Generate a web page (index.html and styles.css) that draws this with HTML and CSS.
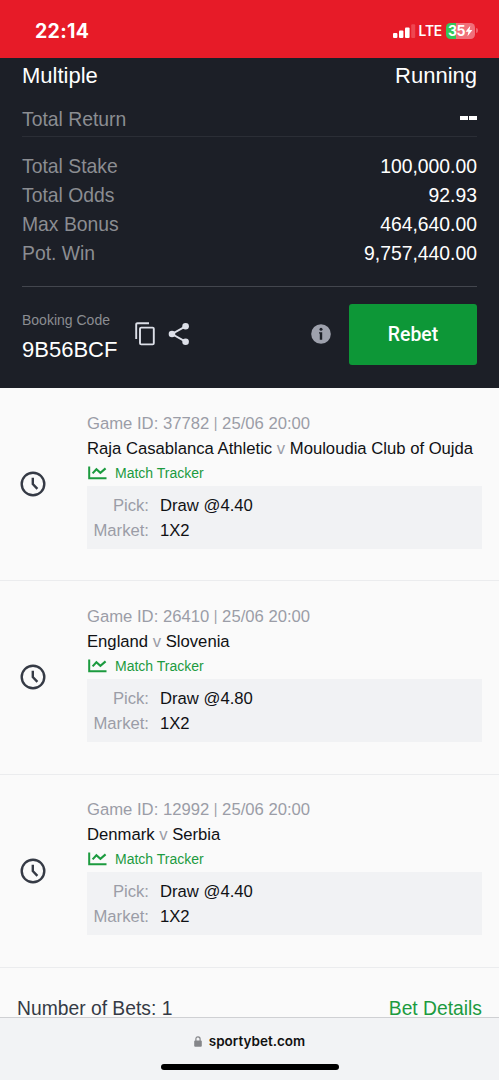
FILE: index.html
```html
<!DOCTYPE html>
<html lang="en">
<head>
<meta charset="utf-8">
<meta name="viewport" content="width=device-width, initial-scale=1">
<title>SportyBet</title>
<link rel="stylesheet" href="styles.css">
</head>
<body>
<svg class="sprite" width="0" height="0">
  <symbol id="clock" viewBox="0 0 26 26">
    <circle cx="13" cy="13" r="11.3" fill="none" stroke="#353a45" stroke-width="2.4"/>
    <path d="M12.8 6.8V13L17.4 17.8" fill="none" stroke="#353a45" stroke-width="2.4"/>
  </symbol>
  <symbol id="chart" viewBox="0 0 19 14">
    <path d="M1.2 0.5V12.3H18.5" fill="none" stroke="#1c9b3f" stroke-width="2"/>
    <path d="M4.6 7.4L8.4 3.2L12.4 6.8L17.6 2.4" fill="none" stroke="#1c9b3f" stroke-width="2.1"/>
  </symbol>
</svg>
<div class="screen">
  <header class="status">
    <span class="time">22:14</span>
    <div class="indicators">
      <svg class="signal" width="23" height="14" viewBox="0 0 23 14">
        <rect x="0" y="9" width="4.4" height="5" rx="1" fill="#fff"/>
        <rect x="6" y="6.5" width="4.4" height="7.5" rx="1" fill="#fff"/>
        <rect x="12" y="3.5" width="4.6" height="10.5" rx="1" fill="#fff"/>
        <rect x="18.2" y="0.3" width="4" height="13.7" rx="1" fill="#ee4651"/>
      </svg>
      <span class="network">LTE</span>
      <div class="battery">
        <span>35</span>
        <svg width="8" height="12" viewBox="0 0 8 12"><path d="M5.3 0.8L0.6 6.7H3.4L2.5 11.2L7.4 5.1H4.5Z" fill="#fff"/></svg>
      </div>
      <i class="battery-tip"></i>
    </div>
  </header>

  <section class="summary">
    <div class="heading"><span>Multiple</span><span>Running</span></div>
    <div class="row return"><span>Total Return</span><b class="dashes"><i></i><i></i></b></div>
    <div class="totals">
      <div class="row"><span>Total Stake</span><b>100,000.00</b></div>
      <div class="row"><span>Total Odds</span><b>92.93</b></div>
      <div class="row"><span>Max Bonus</span><b>464,640.00</b></div>
      <div class="row"><span>Pot. Win</span><b>9,757,440.00</b></div>
    </div>
    <div class="booking">
      <div class="code"><small>Booking Code</small><span>9B56BCF</span></div>
      <svg class="copy" width="20" height="24" viewBox="0 0 20 24" fill="none" stroke="#dcdfe8" stroke-width="1.9">
        <path d="M1.2 17V2.5Q1.2 1.2 2.5 1.2H14"/>
        <rect x="5" y="5.6" width="13.8" height="16.8" rx="1.2"/>
      </svg>
      <svg class="share" width="22" height="24" viewBox="0 0 22 24">
        <path d="M17.5 4.3L4 12L17.5 19.7" fill="none" stroke="#dcdfe8" stroke-width="1.9"/>
        <circle cx="17.6" cy="4.2" r="3.3" fill="#dcdfe8"/><circle cx="4" cy="12" r="3.3" fill="#dcdfe8"/><circle cx="17.6" cy="19.8" r="3.3" fill="#dcdfe8"/>
      </svg>
      <svg class="info" width="20" height="20" viewBox="0 0 20 20">
        <circle cx="10" cy="10" r="9.8" fill="#9ea1ad"/>
        <circle cx="10" cy="5.3" r="1.5" fill="#1c1f27"/><path d="M8 8.2H11.2V15.8H8.8V9.6H8Z" fill="#1c1f27"/>
      </svg>
      <button class="rebet">Rebet</button>
    </div>
  </section>

  <main class="bets">
    <article class="bet">
      <svg class="clock" width="26" height="26"><use href="#clock"/></svg>
      <div class="details">
        <div class="game">Game ID: 37782 <i>|</i> 25/06 20:00</div>
        <div class="teams">Raja Casablanca Athletic <i>v</i> Mouloudia Club of Oujda</div>
        <div class="tracker"><svg width="19" height="14"><use href="#chart"/></svg>Match Tracker</div>
        <dl class="pick"><dt>Pick:</dt><dd>Draw @4.40</dd><dt>Market:</dt><dd>1X2</dd></dl>
      </div>
    </article>
    <article class="bet">
      <svg class="clock" width="26" height="26"><use href="#clock"/></svg>
      <div class="details">
        <div class="game">Game ID: 26410 <i>|</i> 25/06 20:00</div>
        <div class="teams">England <i>v</i> Slovenia</div>
        <div class="tracker"><svg width="19" height="14"><use href="#chart"/></svg>Match Tracker</div>
        <dl class="pick"><dt>Pick:</dt><dd>Draw @4.80</dd><dt>Market:</dt><dd>1X2</dd></dl>
      </div>
    </article>
    <article class="bet">
      <svg class="clock" width="26" height="26"><use href="#clock"/></svg>
      <div class="details">
        <div class="game">Game ID: 12992 <i>|</i> 25/06 20:00</div>
        <div class="teams">Denmark <i>v</i> Serbia</div>
        <div class="tracker"><svg width="19" height="14"><use href="#chart"/></svg>Match Tracker</div>
        <dl class="pick"><dt>Pick:</dt><dd>Draw @4.40</dd><dt>Market:</dt><dd>1X2</dd></dl>
      </div>
    </article>
    <div class="count"><span>Number of Bets: 1</span><a>Bet Details</a></div>
  </main>

  <footer class="browser">
    <div class="address">
      <svg width="8" height="11" viewBox="0 0 8 11"><rect x="0.2" y="4.5" width="7.6" height="6.2" rx="1" fill="#85868a"/><path d="M1.9 5V3Q1.9 0.8 4 0.8T6.1 3V5" fill="none" stroke="#85868a" stroke-width="1.2"/></svg>
      <span>sportybet.com</span>
    </div>
    <div class="home"></div>
  </footer>
</div>
</body>
</html>
```
FILE: styles.css
```css
* { box-sizing: border-box; }
body { margin: 0; font-family: "Liberation Sans", Arial, sans-serif; }
i { font-style: normal; }
svg { display: block; flex: none; }
.sprite { position: absolute; }
.screen { width: 499px; height: 1080px; display: flex; flex-direction: column; overflow: hidden; background: #fafafa; }

.status { flex: none; height: 58px; background: #e71b28; color: #fff; display: flex; justify-content: space-between; align-items: center; padding: 3px 21px 0 35px; font-family: Inter, sans-serif; }
.time { font-size: 19.5px; font-weight: 700; letter-spacing: 0.3px; }
.indicators { display: flex; align-items: center; }
.network { font-size: 13.8px; font-weight: 600; margin: 0 4px 0 3px; letter-spacing: -0.2px; }
.battery { width: 29px; height: 16px; border-radius: 4.5px; background: linear-gradient(90deg, #35c759 0 10px, #f0707a 10px); display: flex; align-items: center; justify-content: center; font-size: 14px; font-weight: 700; letter-spacing: -0.6px; }
.battery-tip { width: 2px; height: 5px; margin-left: 1px; border-radius: 0 2px 2px 0; background: #f0616b; }

.summary { flex: none; height: 330px; background: #1c1f27; padding: 0 22px; color: #fff; }
.heading { display: flex; justify-content: space-between; height: 36px; line-height: 35px; font-size: 22px; }
.row { display: flex; justify-content: space-between; align-items: center; height: 29px; font-size: 19.35px; color: #8b8d92; }
.row b { font-weight: 400; color: #fff; }
.return { height: 43px; padding-top: 8px; border-bottom: 1px solid #2b2e36; }
.dashes { display: flex; gap: 1px; margin-top: -2px; }
.dashes i { width: 8px; height: 4px; background: #fff; }
.totals { height: 150px; padding-top: 15px; border-bottom: 1px solid #43464e; }
.totals .row { line-height: 20px; padding-bottom: 1px; }
.booking { display: flex; align-items: center; height: 94px; }
.code { width: 113px; display: flex; flex-direction: column; padding-top: 7px; }
.code small { font-size: 14px; line-height: 24px; color: #8b8d92; }
.code span { font-size: 22px; line-height: 36px; }
.share { margin-left: 13px; }
.info { margin-left: auto; margin-right: 18px; }
.rebet { width: 128px; height: 61px; border: 0; border-radius: 3px; background: #0d9737; color: #fff; font: 500 19.4px Roboto, sans-serif; padding: 0; }

.bets { flex: 1; min-height: 0; overflow: hidden; }
.bet { height: 193.3px; border-bottom: 1px solid #ebecee; display: flex; align-items: center; padding: 0 17px 0 20px; }
.details { width: 396px; margin-left: 41px; padding-bottom: 9px; font-size: 16.66px; line-height: 25px; white-space: nowrap; }
.game { color: #9b9da7; }
.game i { font-size: 14px; vertical-align: 1px; }
.teams { color: #101114; }
.teams i { color: #9b9da7; }
.tracker { display: flex; align-items: center; gap: 8px; padding: 0 0 1px 1px; font-size: 14px; line-height: 24px; color: #1c9b3f; height: 25px; }
.pick { margin: 0; height: 63px; padding: 7px 0; background: #f1f2f4; display: grid; grid-template-columns: 62px 1fr; column-gap: 11px; grid-auto-rows: 25px; }
.pick dt { text-align: right; color: #9b9da7; }
.pick dd { margin: 0; color: #101114; }
.count { display: flex; justify-content: space-between; padding: 27px 17px 0; font-size: 19.3px; line-height: 28px; color: #353a45; }
.count a { color: #1c9b3f; }

.browser { flex: none; height: 63px; border-top: 1px solid #cfd0d3; background: #f2f3f5; display: flex; flex-direction: column; align-items: center; }
.address { display: flex; align-items: center; gap: 7px; margin-top: 13px; height: 20px; font: 600 13.5px Inter, sans-serif; color: #111; }
.home { width: 178px; height: 6px; margin-top: 13px; border-radius: 3px; background: #000; }
```
